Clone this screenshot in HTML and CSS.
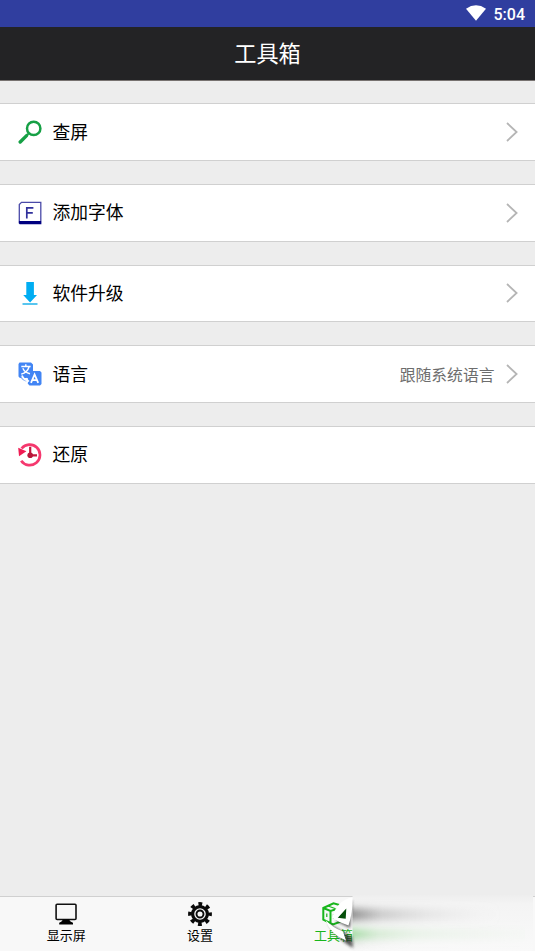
FILE: index.html
```html
<!DOCTYPE html>
<html lang="zh-CN">
<head>
<meta charset="utf-8">
<title>工具箱</title>
<link rel="stylesheet" href="styles.css">
</head>
<body>
<div class="status">
  <svg class="wifi" width="20" height="16" viewBox="0 0 20 16"><path d="M0 3.7Q10-3.2 20 3.7L10 15.7Z" fill="#fff"/></svg>
  <span class="time">5:04</span>
</div>
<header class="title">工具箱</header>
<main class="list">
  <div class="row">
    <svg class="icon" width="24" height="24" viewBox="0 0 24 24" fill="none" stroke="#16a045"><circle cx="15.7" cy="8.4" r="6.7" stroke-width="2.5"/><path d="M10.7 13.4 8.8 15.3" stroke-width="2"/><path d="M8.6 15.6 2.2 22" stroke-width="3.4" stroke-linecap="round"/></svg>
    <span class="label">查屏</span>
    <svg class="chevron" width="12" height="20" viewBox="0 0 12 20"><path d="M1 1 10.6 10 1 19"/></svg>
  </div>
  <div class="row">
    <svg class="icon" width="24" height="24" viewBox="0 0 24 24" fill="none"><path d="M1.3 20V3.5L3.5 1.3H22.8V20" stroke="#4a4aa8" stroke-width="1.3"/><path d="M.7 20H23.4V23.3H1.7L.7 22.3Z" fill="#000080"/><path d="M8.8 17.5V6.9H15.4M8.8 11.9H14.8" stroke="#30309c" stroke-width="1.7"/></svg>
    <span class="label">添加字体</span>
    <svg class="chevron" width="12" height="20" viewBox="0 0 12 20"><path d="M1 1 10.6 10 1 19"/></svg>
  </div>
  <div class="row">
    <svg class="icon" width="24" height="24" viewBox="0 0 24 24"><path d="M8.3 1H15.9V14H19L12.1 21.4 5.2 14H8.3Z" fill="#00adf2"/><path d="M4.5 22H19.5V24H4.5Z" fill="#58c5ef"/></svg>
    <span class="label">软件升级</span>
    <svg class="chevron" width="12" height="20" viewBox="0 0 12 20"><path d="M1 1 10.6 10 1 19"/></svg>
  </div>
  <div class="row">
    <svg class="icon" width="24" height="24" viewBox="0 0 24 24" fill="none"><path d="M1.5.5H13L15 2.5V9H22L23.5 10.5V22L22 23.5H11.5L9.8 21.8V16H2L.5 14.5V2Z" fill="#4285f4"/><path d="M3.3 4.5H12.6M7.8 2.2V4.5M4.8 6.2C6 9 8.5 10.8 12 11.7M11 5C10 8.5 7.5 11 3.2 12.2" stroke="#fff" stroke-width="1.4"/><path d="M3 14.5Q5 18.8 9.8 19" stroke="#7eaaf5" stroke-width="1.6"/><path d="M4 13.5Q5.5 17.5 9 18.2" stroke="#fff" stroke-width="1.8"/><path d="M8 15.5 11.5 19 8.5 21.5Z" fill="#fff"/><path d="M13 20.8 16.6 12.5 20.2 20.8M14.3 18.1H19" stroke="#fff" stroke-width="1.8"/></svg>
    <span class="label">语言</span>
    <span class="value">跟随系统语言</span>
    <svg class="chevron" width="12" height="20" viewBox="0 0 12 20"><path d="M1 1 10.6 10 1 19"/></svg>
  </div>
  <div class="row">
    <svg class="icon" width="24" height="24" viewBox="0 0 24 24" fill="none"><path d="M3.6 5.5A10.3 10.3 0 1 1 3.2 17.7" stroke="#f5386e" stroke-width="2.7"/><path d="M.2 4.8 8.4 8.3 1 13.2Z" fill="#f01c54"/><path d="M12.2 3.8V12.3H19" stroke="#c4183d" stroke-width="2.2"/><circle cx="12.2" cy="12.2" r="2.8" fill="#b9163a"/></svg>
    <span class="label">还原</span>
  </div>
</main>
<nav class="tabs">
  <div class="tab">
    <svg width="24" height="24" viewBox="0 0 24 24"><rect x="2.1" y="2.2" width="19.9" height="15.3" rx="1" fill="none" stroke="#111" stroke-width="1.6"/><path d="M9 17.5H15L16.5 19.5 19 20.7V22.6H5.2V20.7L7.5 19.5Z" fill="#000"/></svg>
    <span>显示屏</span>
  </div>
  <div class="tab">
    <svg width="24" height="24" viewBox="0 0 24 24" fill="none" stroke="#0a0a0a"><circle cx="12" cy="12" r="10" stroke-width="3.8" stroke-dasharray="3.8 4.054" stroke-dashoffset="1.9"/><circle cx="12" cy="12" r="7.4" stroke-width="3.2"/><circle cx="12" cy="12" r="3.5" stroke-width="1.9"/></svg>
    <span>设置</span>
  </div>
  <div class="tab active">
    <svg class="box" width="26" height="24" viewBox="0 0 26 24" fill="none" stroke="#18b61c" stroke-width="2"><path d="M2.3 6 12.5 1.4 24 4.5V18L12 22.4 2.3 17.6ZM2.3 6 9.5 9 24 4.5M9.5 9V21"/><path d="M5.8 11.5V15M12.5 12V17M15.5 11V16M7 4 14 6.5" stroke-width="1.2"/></svg>
    <span>工具箱</span>
  </div>
  <div class="tab"></div>
  <svg class="smear" width="235" height="56" viewBox="300 895 235 56">
    <defs>
      <linearGradient id="gray"><stop offset="0" stop-color="#666" stop-opacity=".8"/><stop offset=".2" stop-color="#999" stop-opacity=".5"/><stop offset=".5" stop-color="#bbb" stop-opacity=".3"/><stop offset="1" stop-color="#ddd" stop-opacity="0"/></linearGradient>
      <linearGradient id="green"><stop offset="0" stop-color="#63c563" stop-opacity=".75"/><stop offset=".15" stop-color="#a0d89c" stop-opacity=".5"/><stop offset=".4" stop-color="#c6e7c3" stop-opacity=".35"/><stop offset="1" stop-color="#d9efd7" stop-opacity=".1"/></linearGradient>
      <linearGradient id="fade" x1="0" y1="0" x2="0" y2="1"><stop offset="0" stop-color="#eee"/><stop offset=".16" stop-color="#f4f4f4"/><stop offset="1" stop-color="#f9f9f9"/></linearGradient>
      <filter id="soft" filterUnits="userSpaceOnUse" x="340" y="890" width="200" height="64"><feGaussianBlur stdDeviation="0 4"/></filter>
      <filter id="shadow" filterUnits="userSpaceOnUse" x="315" y="890" width="50" height="64"><feGaussianBlur stdDeviation="1.7"/></filter>
      <clipPath id="right"><path d="M352.5 895H535V951H352.5Z"/></clipPath>
    </defs>
    <g clip-path="url(#right)">
      <path d="M352 895H533V951H352Z" fill="url(#fade)"/>
      <path d="M352 909H500V920H352Z" fill="url(#gray)" filter="url(#soft)"/>
      <path d="M352 930H525V938H352Z" fill="url(#green)" filter="url(#soft)"/>
      <path d="M352 942H420V945H352Z" fill="url(#gray)" opacity=".35" filter="url(#soft)"/>
    </g>
    <path d="M352 900 350 928 336 921ZM328 923Q337 939 353 948L352 937Z" fill="#222" opacity=".75" filter="url(#shadow)"/>
    <path d="M336 920 348 906 347 922Z" fill="#064f0b"/>
    <path fill-rule="evenodd" d="M352.5 897.5Q337 900 332 918Q340 923 348.5 925.5Q353 912 352.5 897.5ZM337.5 917.7 346.3 908.5 345.7 918.7Z" fill="#fff"/>
    <path d="M325.5 920Q331 935 346 940.5L343 931.5Q333 928 325.5 920Z" fill="#fff"/>
  </svg>
</nav>
</body>
</html>
```
FILE: styles.css
```css
* { box-sizing: border-box; }
body {
  margin: 0;
  height: 951px;
  overflow: hidden;
  display: flex;
  flex-direction: column;
  background: #ededed;
  color: #000;
  font-family: Roboto, "Noto Sans CJK SC", sans-serif;
}
svg { display: block; flex: none; }
.status {
  height: 27px;
  display: flex;
  align-items: center;
  justify-content: flex-end;
  gap: 8px;
  padding-right: 10px;
  background: #303e9f;
  color: #fff;
}
.wifi { margin-bottom: 1px; }
.time { font-size: 16px; font-weight: 500; line-height: 27px; padding-top: 2px; }
.title {
  height: 54px;
  background: #232325;
  border-bottom: 1px solid #777270;
  color: #fff;
  font-size: 22.2px;
  line-height: 55px;
  text-align: center;
}
.list {
  flex: 1;
  display: flex;
  flex-direction: column;
  gap: 22.8px;
  padding-top: 22.4px;
}
.row {
  height: 57.8px;
  display: flex;
  align-items: center;
  padding: 0 17.5px;
  background: #fff;
  border: solid #d0d0d0;
  border-width: 1px 0;
}
.label { flex: 1; margin-left: 11px; padding-top: 1px; font-size: 17.8px; line-height: 26px; }
.value { margin-right: 11px; color: #6d6d6d; font-size: 15.8px; }
.chevron { fill: none; stroke: #b5b5b5; stroke-width: 1.8; }
.tabs {
  position: relative;
  height: 55px;
  display: grid;
  grid-template-columns: repeat(4, 133.6px);
  background: #f8f8f8;
  border-top: 1px solid #d0d0d0;
}
.tab {
  display: flex;
  flex-direction: column;
  align-items: center;
  padding: 5px 1px 0 0;
  font-size: 13px;
  line-height: 19px;
}
.active { color: #18b61c; }
.box { margin-left: 1px; }
.smear { position: absolute; right: 0; bottom: 0; }
```
